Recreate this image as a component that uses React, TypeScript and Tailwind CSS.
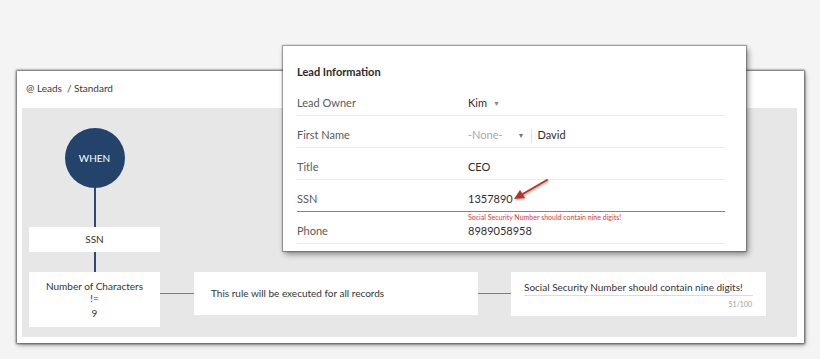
import React from 'react';

const FieldRow = ({ label, children }: { label: string; children: React.ReactNode }) => (
    <div className="flex items-center h-[32px] pt-[13px] pb-[5px] border-b border-[#ececec]">
        <span className="w-[171px] text-[#5a5a5a]">{label}</span>
        <div className="flex items-center text-[#2e2e2e]">{children}</div>
    </div>
);

export default function App() {
    return (
        <div className="relative w-[820px] h-[359px] bg-[#f4f4f4] overflow-hidden pt-[71px] pl-[17px] font-['Lato',sans-serif]">
            {/* Rule builder window */}
            <div className="w-[787px] h-[272px] bg-white flex flex-col pl-[5px] pr-[7px] pb-[6px] shadow-[0_0_2px_1px_rgba(40,40,40,0.7),1px_2px_5px_rgba(0,0,0,0.35)]">
                <div className="h-[37px] flex items-center pl-[4px] pb-[2px] text-[10px] text-[#3a3a3a]">
                    <span>@ Leads</span>
                    <span className="ml-[5px]">/ Standard</span>
                </div>
                <div className="flex-1 bg-[#e7e7e7] pl-[7px] pt-[20px] flex flex-col">
                    <div className="w-[131px] flex flex-col items-center">
                        <div className="w-[60px] h-[60px] rounded-full bg-[#24436a] flex items-center justify-center text-white text-[10px]">
                            WHEN
                        </div>
                        <div className="w-[2px] h-[39px] bg-[#2c4a6e]" />
                        <div className="w-full h-[25px] bg-white flex items-center justify-center text-[10px] text-[#333]">SSN</div>
                        <div className="w-[2px] h-[20px] bg-[#2c4a6e]" />
                    </div>
                    <div className="flex items-start">
                        <div className="w-[131px] h-[55px] bg-white flex flex-col items-center justify-center text-[10px] text-[#333] leading-[12px]">
                            <span>Number of Characters</span>
                            <span>!=</span>
                            <span className="mt-[3px]">9</span>
                        </div>
                        <div className="w-[34px] h-px bg-[#6a82a0] mt-[21px]" />
                        <div className="w-[284px] h-[43px] bg-white flex items-center pl-[17px] text-[10px] text-[#333]">
                            This rule will be executed for all records
                        </div>
                        <div className="w-[33px] h-px bg-[#6a82a0] mt-[21px]" />
                        <div className="w-[255px] h-[44px] bg-white px-[13px] pt-[9px]">
                            <div className="text-[10px] text-[#333] border-b border-[#dcdcdc] pb-[2px] leading-[12px]">
                                Social Security Number should contain nine digits!
                            </div>
                            <div className="text-right text-[7px] text-[#9a9a9a] mt-[3px] pr-[1px]">51/100</div>
                        </div>
                    </div>
                </div>
            </div>

            {/* Lead information popup */}
            <div className="absolute left-[283px] top-[46px] w-[463px] h-[205px] bg-white pl-[14px] pr-[21px] pt-[19px] text-[11px] shadow-[0_0_1px_1px_rgba(80,80,80,0.5),2px_3px_6px_rgba(0,0,0,0.45)]">
                <div className="h-[14px] leading-[14px] font-bold text-[#2a2a2a] mb-[5px]">Lead Information</div>
                <FieldRow label="Lead Owner">
                    <span>Kim</span>
                    <span className="ml-[6px] text-[7px] text-[#888]">▼</span>
                </FieldRow>
                <FieldRow label="First Name">
                    <span className="text-[#a8a8a8]">-None-</span>
                    <span className="ml-[15px] text-[7px] text-[#777]">▼</span>
                    <span className="ml-[6px] w-px h-[14px] bg-[#dedede]" />
                    <span className="ml-[6px]">David</span>
                </FieldRow>
                <FieldRow label="Title">
                    <span>CEO</span>
                </FieldRow>
                <div className="flex items-center h-[31px] pt-[13px] pb-[5px]">
                    <span className="w-[171px] text-[#5a5a5a]">SSN</span>
                    <span className="text-[#2e2e2e]">1357890</span>
                </div>
                <div className="h-px bg-[#e25a5c]" />
                <div className="pl-[171px] mt-[1px] h-[9px] leading-[9px] text-[7px] text-[#d9363e]">
                    Social Security Number should contain nine digits!
                </div>
                <div className="flex items-center h-[22px] pt-[3px] pb-[5px] border-b border-[#ececec]">
                    <span className="w-[171px] text-[#5a5a5a]">Phone</span>
                    <span className="text-[#2e2e2e]">8989058958</span>
                </div>

                <svg className="absolute left-[228px] top-[130px]" width="40" height="28" viewBox="0 0 40 28">
                    <defs>
                        <filter id="sh" x="-20%" y="-20%" width="150%" height="150%">
                            <feDropShadow dx="1" dy="1" stdDeviation="0.8" floodColor="#000" floodOpacity="0.4" />
                        </filter>
                    </defs>
                    <g filter="url(#sh)">
                        <line x1="36" y1="4" x2="10" y2="19" stroke="#b2352c" strokeWidth="2" strokeLinecap="round" />
                        <polygon points="3,23 9,14 14,22" fill="#b2352c" />
                    </g>
                </svg>
            </div>
        </div>
    );
}
